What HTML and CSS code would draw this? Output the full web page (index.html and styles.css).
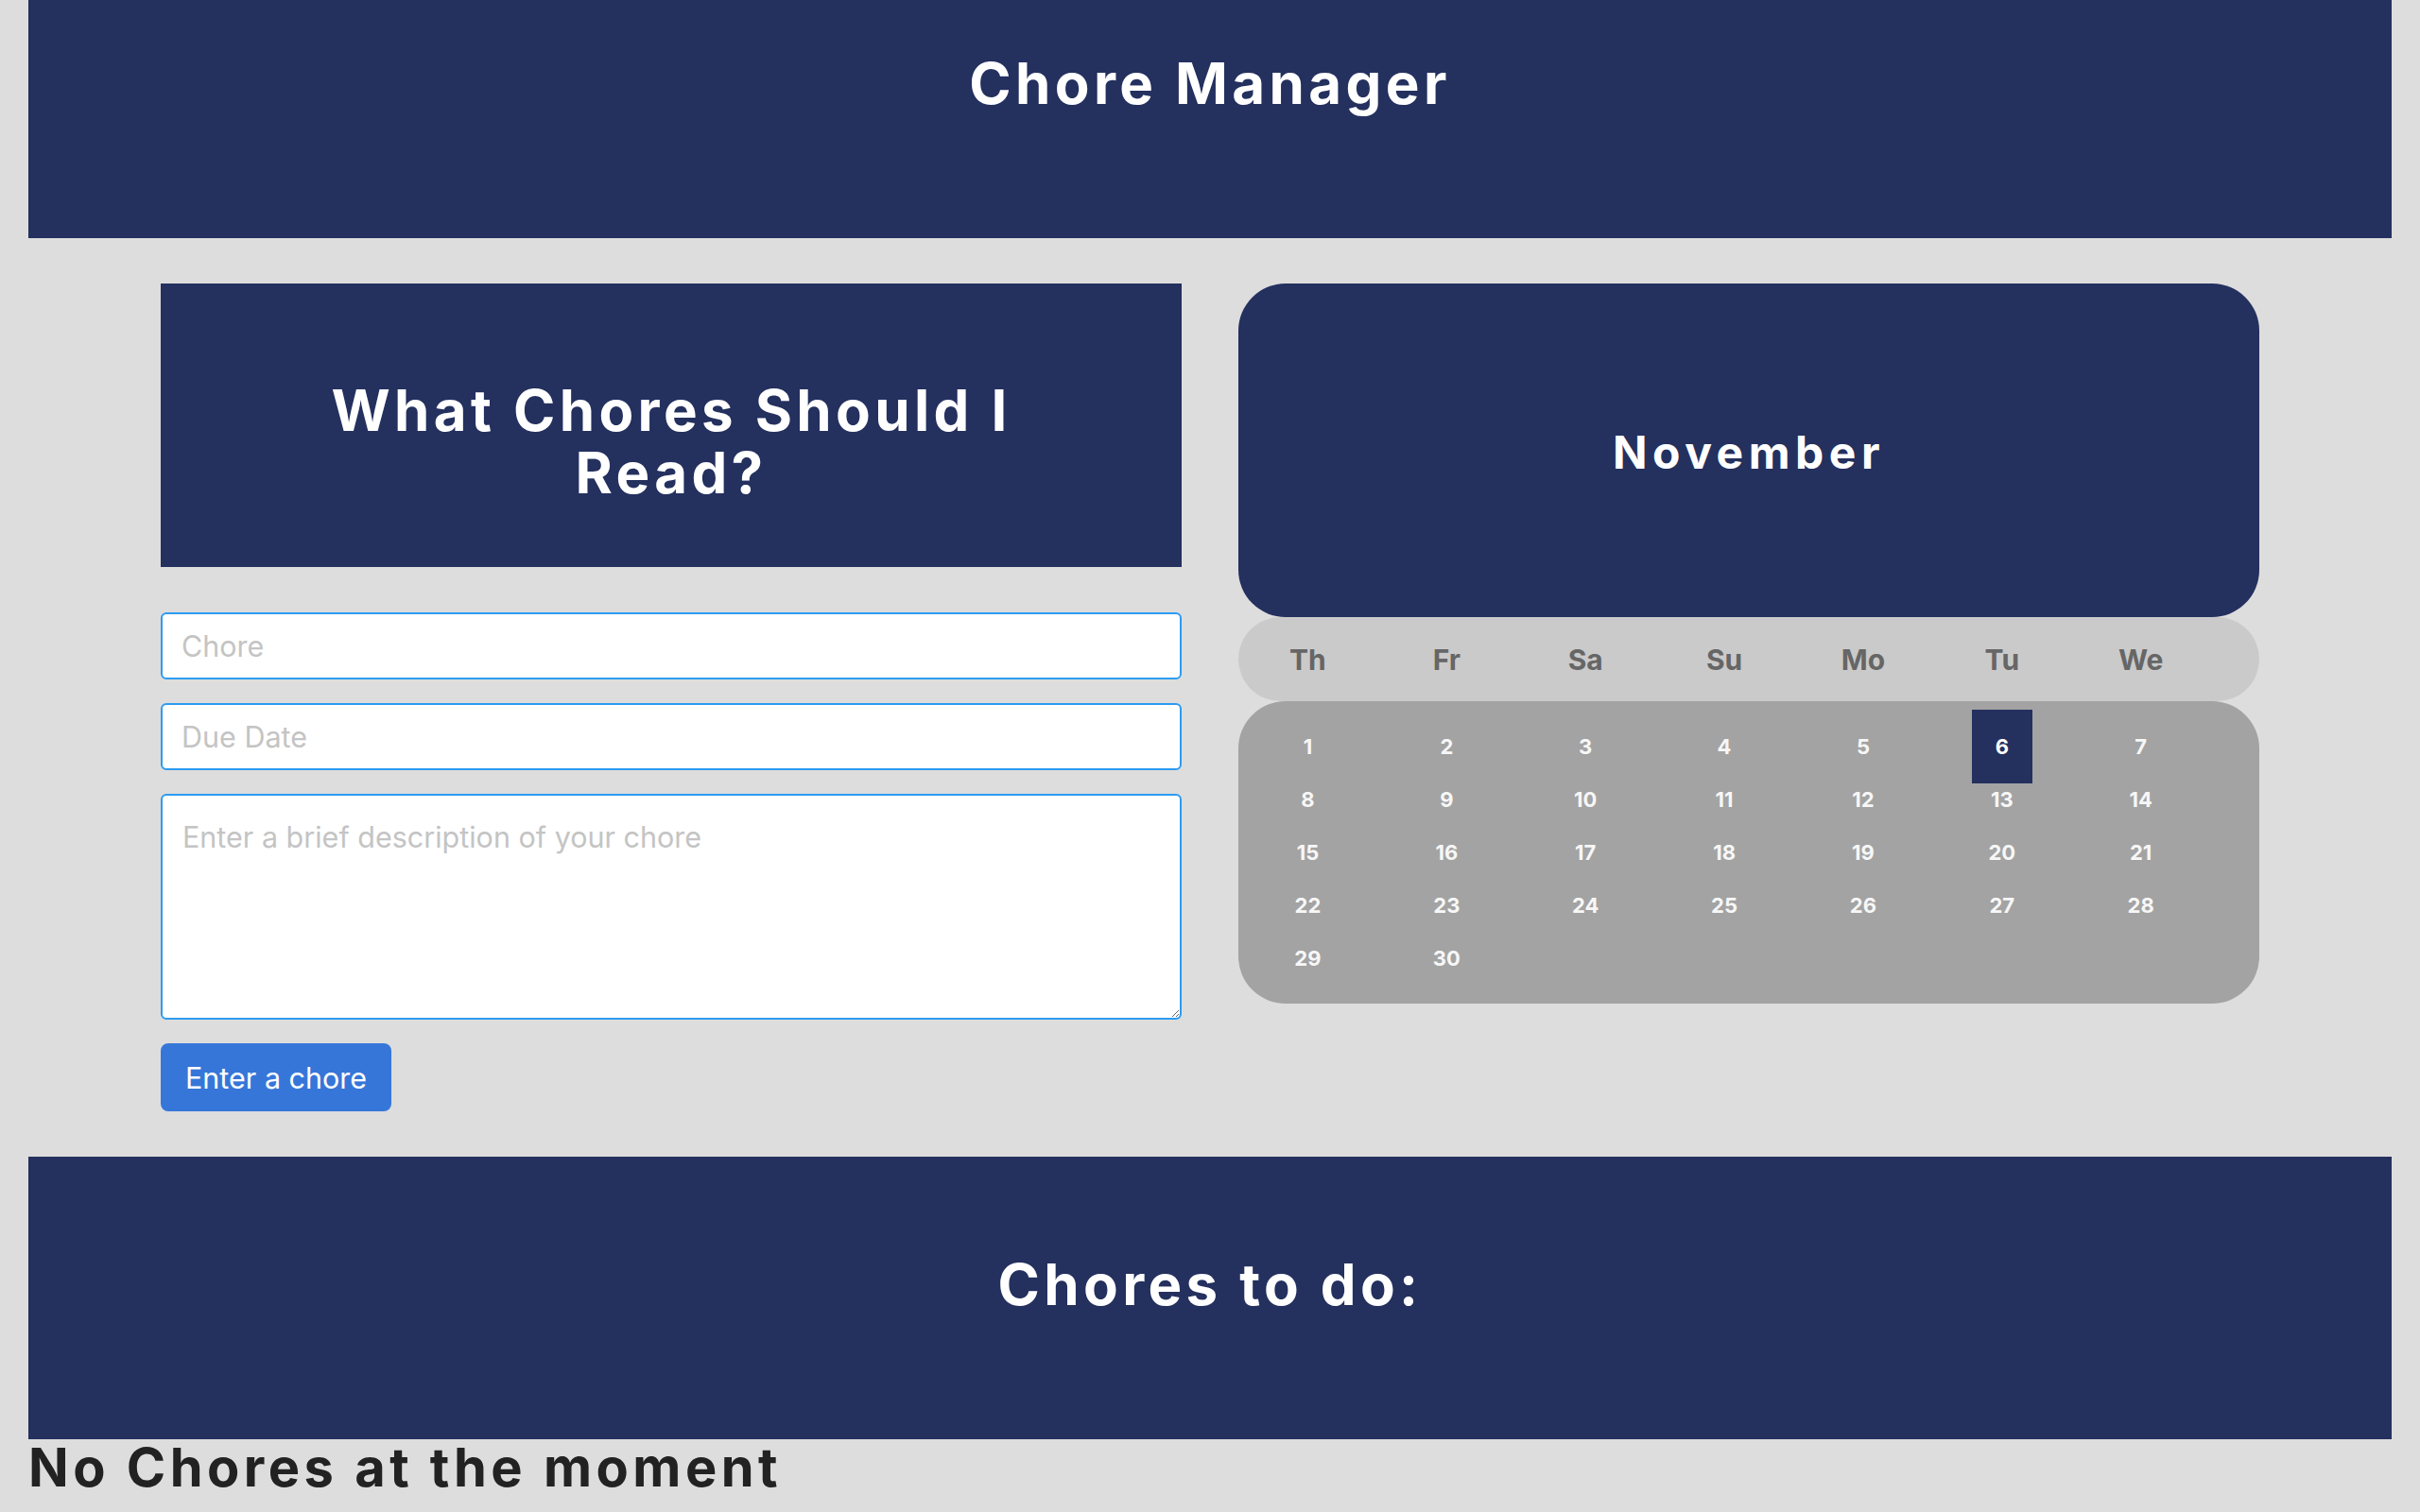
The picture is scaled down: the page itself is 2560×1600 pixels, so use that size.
FILE: index.html
```html
<!DOCTYPE html>
<html lang="en">
<head>
<meta charset="utf-8">
<title>Chore Manager</title>
<link rel="stylesheet" href="styles.css">
</head>
<body>
<header class="banner">
  <h1 class="banner-title">Chore Manager</h1>
</header>

<main class="layout">
  <section class="form-col">
    <div class="form-card">
      <h2 class="form-card-title">What Chores Should I Read?</h2>
    </div>
    <form class="chore-form">
      <input class="field" type="text" placeholder="Chore">
      <input class="field" type="text" placeholder="Due Date">
      <textarea class="field field-area" placeholder="Enter a brief description of your chore"></textarea>
      <button class="btn" type="button">Enter a chore</button>
    </form>
  </section>

  <section class="calendar">
    <div class="month">
      <h2 class="month-title">November</h2>
    </div>
    <ul class="weekdays">
      <li>Th</li><li>Fr</li><li>Sa</li><li>Su</li><li>Mo</li><li>Tu</li><li>We</li>
    </ul>
    <ul class="days">
      <li>1</li><li>2</li><li>3</li><li>4</li><li>5</li><li><span class="active">6</span></li><li>7</li>
      <li>8</li><li>9</li><li>10</li><li>11</li><li>12</li><li>13</li><li>14</li>
      <li>15</li><li>16</li><li>17</li><li>18</li><li>19</li><li>20</li><li>21</li>
      <li>22</li><li>23</li><li>24</li><li>25</li><li>26</li><li>27</li><li>28</li>
      <li>29</li><li>30</li>
    </ul>
  </section>
</main>

<section class="todo">
  <h2 class="todo-title">Chores to do:</h2>
</section>
<p class="empty">No Chores at the moment</p>
</body>
</html>
```

FILE: styles.css
```css
* { box-sizing: border-box; }

html, body {
  margin: 0;
  padding: 0;
}

body {
  background: #dddddd;
  font-family: Inter, "Noto Sans", "Liberation Sans", sans-serif;
  padding: 0 30px;
  min-height: 1600px;
}

.banner {
  background: #24305e;
  height: 252px;
  padding-top: 52px;
}

.banner-title,
.form-card-title,
.month-title,
.todo-title {
  margin: 0;
  color: #ffffff;
  text-align: center;
  font-weight: 700;
  letter-spacing: 0.073em;
}

.banner-title {
  font-size: 60px;
  line-height: 72px;
}

.layout {
  width: 2220px;
  margin: 48px auto 0;
  display: grid;
  grid-template-columns: 1080px 1080px;
  column-gap: 60px;
  align-items: start;
}

.form-card {
  background: #24305e;
  height: 300px;
  padding: 101px 100px 0;
}

.form-card-title {
  font-size: 60px;
  line-height: 66px;
}

.chore-form {
  margin-top: 48px;
  display: flex;
  flex-direction: column;
  gap: 25px;
}

.field {
  display: block;
  width: 100%;
  height: 71px;
  border: 2px solid #2d9bf0;
  border-radius: 6px;
  background: #ffffff;
  padding: 0 20px;
  font-family: Inter, "Noto Sans", "Liberation Sans", sans-serif;
  font-size: 30.5px;
  color: #333;
  outline: none;
}

.field::placeholder {
  color: #c4c4c4;
}

.field-area {
  height: 239px;
  padding: 21px 21px;
  line-height: 1.5;
  resize: vertical;
}

.btn {
  align-self: flex-start;
  height: 72px;
  padding: 0 26px;
  border: none;
  border-radius: 8px;
  background: #3676d9;
  color: #ffffff;
  font-family: Inter, "Noto Sans", "Liberation Sans", sans-serif;
  font-size: 30.5px;
}

.month {
  background: #24305e;
  height: 353px;
  border-radius: 50px;
  padding-top: 150px;
}

.month-title {
  font-size: 48px;
  line-height: 58px;
  letter-spacing: 0.115em;
}

.weekdays,
.days {
  list-style: none;
  margin: 0;
  display: grid;
  grid-template-columns: repeat(7, 13.6%);
}

.weekdays {
  background: #cacaca;
  height: 89px;
  border-radius: 45px;
  padding: 2px 0 0;
}

.weekdays li {
  text-align: center;
  font-size: 30px;
  line-height: 87px;
  font-weight: 700;
  color: #666666;
}

.days {
  background: #a3a3a3;
  border-radius: 50px;
  padding: 20px 0;
  grid-auto-rows: 56px;
}

.days li {
  text-align: center;
  font-size: 22px;
  line-height: 56px;
  font-weight: 700;
  color: #f7f7f7;
}

.active {
  background: #24305e;
  color: #ffffff;
  padding: 26px 25px;
}

.todo {
  background: #24305e;
  height: 299px;
  margin-top: 48px;
  padding-top: 99px;
}

.todo-title {
  font-size: 60px;
  line-height: 72px;
}

.empty {
  margin: 0;
  font-size: 56px;
  line-height: 60px;
  font-weight: 700;
  letter-spacing: 0.08em;
  color: #222222;
}
```
